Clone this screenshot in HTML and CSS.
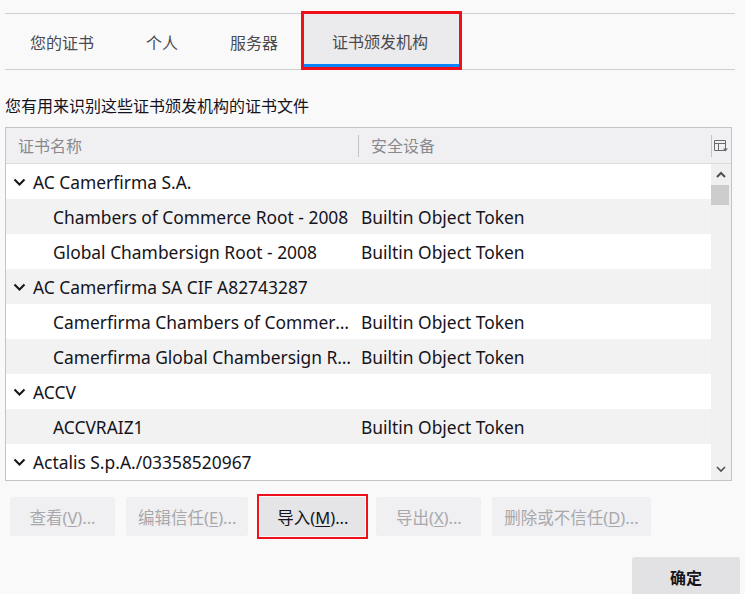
FILE: index.html
```html
<!DOCTYPE html>
<html lang="zh-CN">
<head>
  <meta charset="UTF-8" />
  <title>证书管理器</title>
  <link rel="stylesheet" href="styles.css">
</head>
<body>
  <div class="tabs">
    <div class="tab first">您的证书</div>
    <div class="tab">个人</div>
    <div class="tab">服务器</div>
    <div class="tab selected">证书颁发机构</div>
  </div>

  <p class="desc">您有用来识别这些证书颁发机构的证书文件</p>

  <div class="tree">
    <div class="tree-head">
      <div class="col-name">证书名称</div>
      <div class="col-dev">安全设备</div>
      <div class="col-pick">
        <svg width="16" height="14" viewBox="0 0 16 14">
          <path d="M1.5 1.5h11v10h-11z M1.5 4.5h11 M5.5 4.5v7" fill="none" stroke="#6a6a6a" stroke-width="1"/>
          <path d="M10 9.5h5l-2.5 3z" fill="#6a6a6a"/>
        </svg>
      </div>
    </div>
    <div class="tree-body">
      <div class="rows">
        <div class="row group"><span class="twisty"><svg width="13" height="8" viewBox="0 0 13 8"><path d="M1.5 1.5l5 5 5-5" fill="none" stroke="#15141a" stroke-width="2"/></svg></span>AC Camerfirma S.A.</div>
        <div class="row child alt"><span class="cell-name">Chambers of Commerce Root - 2008</span><span class="cell-dev">Builtin Object Token</span></div>
        <div class="row child"><span class="cell-name">Global Chambersign Root - 2008</span><span class="cell-dev">Builtin Object Token</span></div>
        <div class="row group alt"><span class="twisty"><svg width="13" height="8" viewBox="0 0 13 8"><path d="M1.5 1.5l5 5 5-5" fill="none" stroke="#15141a" stroke-width="2"/></svg></span>AC Camerfirma SA CIF A82743287</div>
        <div class="row child"><span class="cell-name">Camerfirma Chambers of Commerce Root</span><span class="cell-dev">Builtin Object Token</span></div>
        <div class="row child alt"><span class="cell-name">Camerfirma Global Chambersign Root</span><span class="cell-dev">Builtin Object Token</span></div>
        <div class="row group"><span class="twisty"><svg width="13" height="8" viewBox="0 0 13 8"><path d="M1.5 1.5l5 5 5-5" fill="none" stroke="#15141a" stroke-width="2"/></svg></span>ACCV</div>
        <div class="row child alt"><span class="cell-name">ACCVRAIZ1</span><span class="cell-dev">Builtin Object Token</span></div>
        <div class="row group"><span class="twisty"><svg width="13" height="8" viewBox="0 0 13 8"><path d="M1.5 1.5l5 5 5-5" fill="none" stroke="#15141a" stroke-width="2"/></svg></span>Actalis S.p.A./03358520967</div>
      </div>
      <div class="scrollbar">
        <div class="arrow"><svg width="10" height="7" viewBox="0 0 10 7"><path d="M1 6l4-4 4 4" fill="none" stroke="#505050" stroke-width="2"/></svg></div>
        <div class="thumb"></div>
        <div class="track"></div>
        <div class="arrow"><svg width="10" height="7" viewBox="0 0 10 7"><path d="M1 1l4 4 4-4" fill="none" stroke="#505050" stroke-width="1.6"/></svg></div>
      </div>
    </div>
  </div>

  <div class="actions">
    <button class="btn" disabled>查看(<u>V</u>)...</button>
    <button class="btn" disabled>编辑信任(<u>E</u>)...</button>
    <button class="btn active">导入(<u>M</u>)...</button>
    <button class="btn" disabled>导出(<u>X</u>)...</button>
    <button class="btn" disabled>删除或不信任(<u>D</u>)...</button>
  </div>

  <div class="footer">
    <button class="btn ok">确定</button>
  </div>
</body>
</html>
```

FILE: styles.css
```css
body {
  margin: 0;
  background: #f9f9fa;
  color: #15141a;
  font-family: 'Noto Sans', 'Noto Sans CJK SC', sans-serif;
  font-size: 16px;
}
.tabs {
  display: flex;
  margin: 13px 10px 0 5px;
  height: 55px;
  border-top: 1px solid #cfcfd1;
  border-bottom: 1px solid #cfcfd1;
}
.tab {
  display: flex;
  align-items: center;
  padding: 0 26px;
  color: #4a4a4f;
  box-sizing: border-box;
}
.tab.first {
  padding-left: 25px;
}
.tab.selected {
  padding: 0 31px 0 28px;
  background: #ebebed;
  border-bottom: 3px solid #0a84ff;
  margin-bottom: 2px;
  padding-top: 3px;
  outline: 3px solid #f0101a;
}
.desc {
  margin: 25px 0 0 5px;
  line-height: 22px;
}
.tree {
  margin: 10px 13px 0 5px;
  border: 1px solid #c4c4c6;
  background: #fff;
}
.tree-head {
  display: flex;
  align-items: center;
  height: 35px;
  background: #f0f0f2;
  border-bottom: 1px solid #dcdcde;
  color: #8a8a8e;
}
.col-name {
  width: 340px;
  padding-left: 12px;
  border-right: 1px solid #c4c4c6;
  line-height: 22px;
}
.col-dev {
  flex: 1;
  padding-left: 12px;
  line-height: 22px;
}
.col-pick {
  width: 18px;
  padding-left: 1px;
  border-left: 1px solid #c4c4c6;
  height: 22px;
  display: flex;
  align-items: center;
}
.tree-body {
  display: flex;
  height: 316px;
  overflow: hidden;
  font-size: 17.4px;
}
.rows {
  flex: 1;
}
.row {
  display: flex;
  align-items: center;
  height: 35px;
  white-space: nowrap;
}
.row.alt {
  background: #f2f2f3;
}
.twisty {
  width: 27px;
  padding-left: 7px;
  box-sizing: border-box;
  display: flex;
}
.cell-name {
  width: 300px;
  margin-left: 47px;
  margin-right: 8px;
  overflow: hidden;
  text-overflow: ellipsis;
}
.scrollbar {
  width: 20px;
  background: #f0f0f0;
  display: flex;
  flex-direction: column;
}
.arrow {
  height: 21px;
  display: flex;
  align-items: center;
  justify-content: center;
}
.thumb {
  height: 20px;
  margin: 0 2px 0 0;
  background: #cdcdcd;
}
.track {
  flex: 1;
}
.actions {
  display: flex;
  gap: 11px;
  margin: 16px 0 0 10px;
}
.btn {
  font-family: inherit;
  font-size: 16.5px;
  height: 39px;
  min-width: 105px;
  padding: 0 12px;
  border: none;
  border-radius: 3px;
  background: #f0f0f2;
  color: #a8a8ac;
}
.btn u {
  text-underline-offset: 2px;
}
.btn.active {
  background: #e5e5e7;
  color: #15141a;
  border-radius: 0;
  outline: 2px solid #f0101a;
  outline-offset: 1px;
  margin-left: 1px;
}
.footer {
  display: flex;
  justify-content: flex-end;
  margin: 21px 5px 0 0;
}
.btn.ok {
  width: 108px;
  height: 40px;
  background: #e2e2e4;
  color: #15141a;
  font-size: 16px;
  font-weight: bold;
}
```
